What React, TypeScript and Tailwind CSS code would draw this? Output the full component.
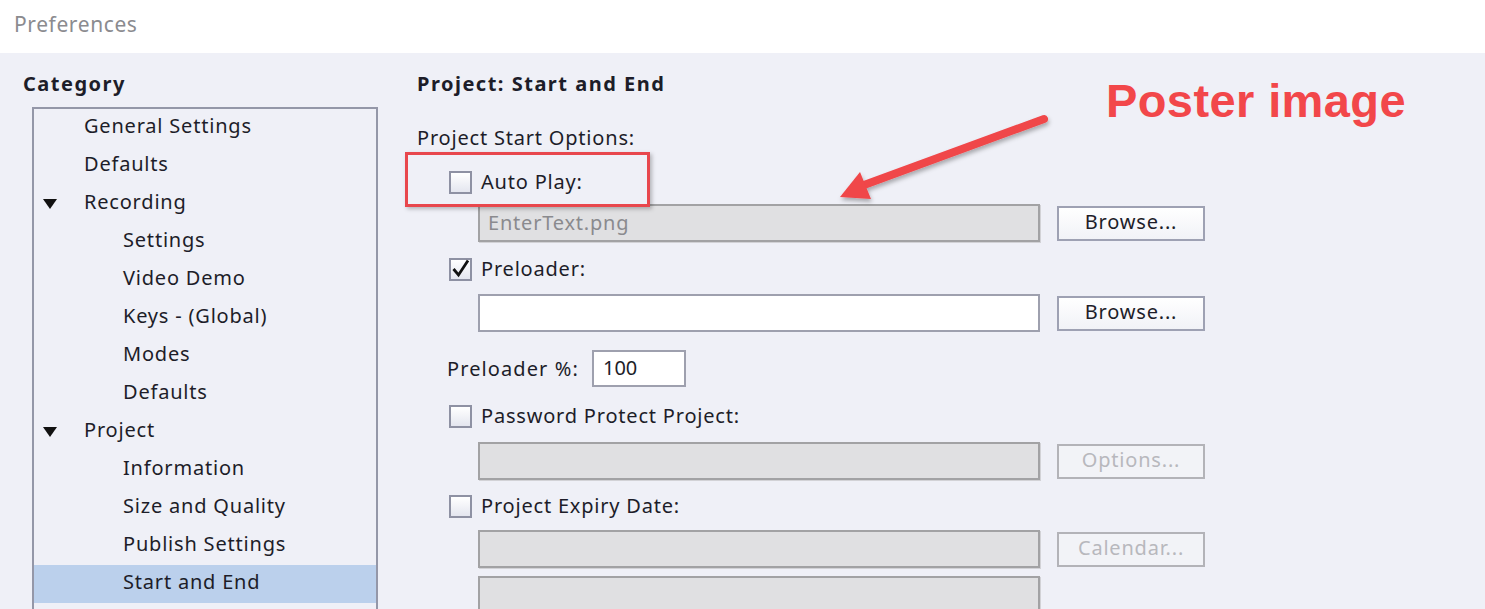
import React from "react";

const font = { fontFamily: '"Noto Sans", "Open Sans", sans-serif' };

type TreeItem = { label: string; level: 1 | 2; open?: boolean; selected?: boolean };

const tree: TreeItem[] = [
  { label: "General Settings", level: 1 },
  { label: "Defaults", level: 1 },
  { label: "Recording", level: 1, open: true },
  { label: "Settings", level: 2 },
  { label: "Video Demo", level: 2 },
  { label: "Keys - (Global)", level: 2 },
  { label: "Modes", level: 2 },
  { label: "Defaults", level: 2 },
  { label: "Project", level: 1, open: true },
  { label: "Information", level: 2 },
  { label: "Size and Quality", level: 2 },
  { label: "Publish Settings", level: 2 },
  { label: "Start and End", level: 2, selected: true },
  { label: "", level: 2 },
];

function Checkbox({ checked }: { checked?: boolean }) {
  return (
    <div className="relative h-[23px] w-[23px] shrink-0 border-2 border-[#8e91a3] bg-gradient-to-b from-white to-[#e4e6ef]">
      {checked && (
        <svg viewBox="0 0 19 19" className="absolute inset-0 h-[19px] w-[19px] overflow-visible">
          <path d="M2.5 9 L7.5 15 L17 0.5" fill="none" stroke="#111" strokeWidth="2.8" />
        </svg>
      )}
    </div>
  );
}

function CheckRow({ label, checked, className }: { label: string; checked?: boolean; className?: string }) {
  return (
    <div className={`flex h-[30px] items-center pl-[32px] ${className ?? ""}`}>
      <Checkbox checked={checked} />
      <span className="ml-[9px] text-[20px] tracking-[0.8px] text-[#1d1d29]">{label}</span>
    </div>
  );
}

function Field({
  value,
  disabled,
  button,
  className,
}: {
  value?: string;
  disabled?: boolean;
  button?: { label: string; disabled?: boolean };
  className?: string;
}) {
  return (
    <div className={`flex items-start pl-[61px] ${className ?? ""}`}>
      <div
        className={`flex h-[38px] w-[562px] items-center border-2 px-[8px] pb-[1px] text-[20px] tracking-[0.8px] ${
          disabled
            ? "border-[#a2a2a4] bg-[#e0e0e2] text-[#8a8a8e] shadow-[1px_1px_0_#d2d2d6]"
            : "border-[#9ea0ae] bg-white text-[#1d1d29]"
        }`}
      >
        {value}
      </div>
      {button && (
        <div
          className={`ml-[17px] mt-[2px] flex h-[35px] w-[148px] items-center justify-center border-2 pb-[3px] text-[20px] tracking-[0.8px] ${
            button.disabled
              ? "border-[#b3b3b8] bg-[#f2f3f7] text-[#b8b8bd]"
              : "border-[#9ea1b3] bg-gradient-to-b from-white to-[#f1f2f7] text-[#1d1d29]"
          }`}
        >
          {button.label}
        </div>
      )}
    </div>
  );
}

export default function App() {
  return (
    <div className="relative h-[609px] w-[1485px] overflow-hidden bg-[#eff0f7]" style={font}>
      <div className="flex h-[53px] items-center bg-white pb-[4px] pl-[14px] text-[21px] tracking-[0.6px] text-[#8b8b8f]">
        Preferences
      </div>

      <div className="flex">
        {/* left: category tree */}
        <div className="w-[417px] shrink-0 pl-[23px]">
          <div className="mt-[16px] flex h-[30px] items-center text-[20px] font-bold tracking-[1.5px] text-[#1d1d29]">
            Category
          </div>
          <div className="ml-[9px] mt-[8px] w-[346px] border-2 border-b-0 border-[#9497a8]">
            {tree.map((t, i) => (
              <div
                key={i}
                className={`relative flex h-[38px] items-center pb-[5px] text-[20px] tracking-[0.8px] text-[#1d1d29] ${
                  t.selected ? "bg-[#bbd0ec]" : ""
                } ${t.level === 1 ? "pl-[50px]" : "pl-[89px]"}`}
              >
                {t.open && (
                  <svg viewBox="0 0 14 10" className="absolute left-[9px] top-[14px] h-[10px] w-[14px]">
                    <polygon points="0,0 14,0 7,10" fill="#111" />
                  </svg>
                )}
                {t.label}
              </div>
            ))}
          </div>
        </div>

        {/* right: options */}
        <div className="flex-1">
          <div className="mt-[16px] flex h-[30px] items-center text-[20px] font-bold tracking-[1.5px] text-[#1d1d29]">
            Project: Start and End
          </div>
          <div className="mt-[24px] flex h-[30px] items-center text-[20px] tracking-[0.8px] text-[#1d1d29]">
            Project Start Options:
          </div>
          <CheckRow label="Auto Play:" className="mt-[14px]" />
          <Field value="EnterText.png" disabled button={{ label: "Browse..." }} className="mt-[7px]" />
          <CheckRow label="Preloader:" checked className="mt-[12px]" />
          <Field value="" button={{ label: "Browse..." }} className="mt-[10px]" />
          <div className="mt-[18px] flex items-center pl-[30px]">
            <span className="text-[20px] tracking-[1.1px] text-[#1d1d29]">Preloader %:</span>
            <div className="ml-[13px] flex h-[37px] w-[94px] items-center border-2 border-[#9ea0ae] bg-white px-[9px] pb-[1px] text-[20px] text-[#1d1d29]">
              100
            </div>
          </div>
          <CheckRow label="Password Protect Project:" className="mt-[14px]" />
          <Field disabled button={{ label: "Options...", disabled: true }} className="mt-[11px]" />
          <CheckRow label="Project Expiry Date:" className="mt-[11px]" />
          <Field disabled button={{ label: "Calendar...", disabled: true }} className="mt-[9px]" />
          <Field disabled className="mt-[8px]" />
        </div>
      </div>

      {/* annotation overlays */}
      <div className="absolute left-[405px] top-[152px] h-[55px] w-[245px] border-[3px] border-[#e8474d] shadow-[2px_2px_4px_rgba(0,0,0,0.25)]" />
      <svg className="absolute left-0 top-0 h-[609px] w-[1485px]" viewBox="0 0 1485 609">
        <defs>
          <filter id="sh" x="-10%" y="-10%" width="130%" height="140%">
            <feDropShadow dx="1" dy="3" stdDeviation="2" floodColor="#000" floodOpacity="0.3" />
          </filter>
        </defs>
        <g filter="url(#sh)">
          <line x1="1044" y1="119" x2="864" y2="185" stroke="#f04649" strokeWidth="8" strokeLinecap="round" />
          <polygon points="840,197 860,172 871,199" fill="#f04649" />
        </g>
      </svg>
      <div
        className="absolute left-[1106px] top-[77px] text-[47px] font-bold leading-none tracking-[0.4px] text-[#f2474a]"
        style={{ fontFamily: '"Liberation Sans", Arial, sans-serif' }}
      >
        Poster image
      </div>
    </div>
  );
}
